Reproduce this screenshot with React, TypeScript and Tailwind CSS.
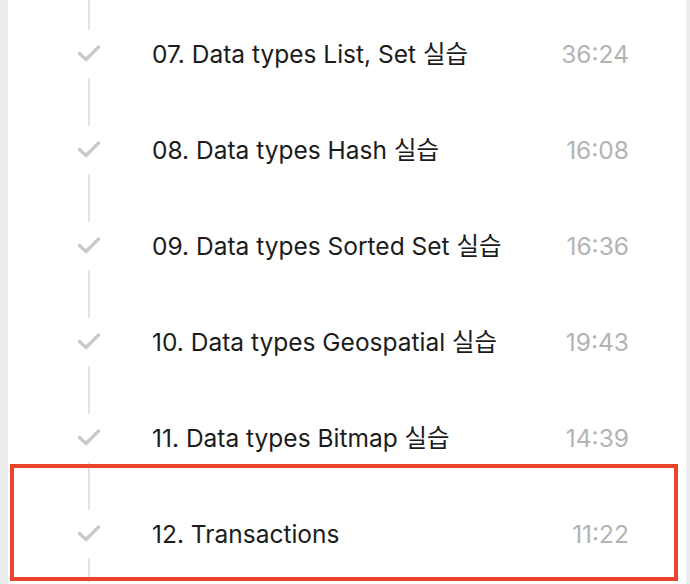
import React from "react"

interface Lesson {
  title: string
  time: string
}

const lessons: Lesson[] = [
  {title: "07. Data types List, Set 실습", time: "36:24"},
  {title: "08. Data types Hash 실습", time: "16:08"},
  {title: "09. Data types Sorted Set 실습", time: "16:36"},
  {title: "10. Data types Geospatial 실습", time: "19:43"},
  {title: "11. Data types Bitmap 실습", time: "14:39"},
  {title: "12. Transactions", time: "11:22"},
]

const CheckIcon = () => (
  <svg width="24" height="20" viewBox="0 0 24 20" fill="none">
    <path
      d="M2.5 9.5 9 15.5 21.5 3"
      stroke="#c9c9c9"
      strokeWidth="3.2"
      strokeLinecap="round"
      strokeLinejoin="round"
    />
  </svg>
)

const Row: React.FC<Lesson> = ({title, time}) => (
  <li className="flex h-[96px] items-stretch">
    <div className="flex w-[144px] shrink-0 flex-col items-center pl-[18px]">
      <div className="h-[24px] w-[2px] bg-[#e3e3e3]" />
      <div className="flex h-[48px] items-center justify-center">
        <CheckIcon />
      </div>
      <div className="h-[24px] w-[2px] bg-[#e3e3e3]" />
    </div>
    <div className="flex flex-1 items-center justify-between pr-[57px]">
      <span className="text-[24.5px] leading-none text-[#1c1c1c]">{title}</span>
      <span className="text-[24.5px] leading-none text-[#b3b3b3]">{time}</span>
    </div>
  </li>
)

const App: React.FC = () => {
  return (
    <main
      className="relative flex h-[584px] w-[690px] overflow-hidden bg-[#ececec]"
      style={{fontFamily: "Inter, 'Noto Sans CJK KR', sans-serif"}}
    >
      <section className="ml-[8px] mr-[4px] flex flex-1 flex-col bg-white">
        <div className="flex h-[6px] w-[144px] justify-center pl-[18px]">
          <div className="h-full w-[2px] bg-[#e3e3e3]" />
        </div>
        <ul className="flex flex-col">
          {lessons.map((l) => (
            <Row key={l.title} {...l} />
          ))}
        </ul>
      </section>
      <div className="pointer-events-none absolute left-[10px] top-[464px] h-[117px] w-[668px] border-4 border-[#e9432b]" />
    </main>
  )
}

export default App
